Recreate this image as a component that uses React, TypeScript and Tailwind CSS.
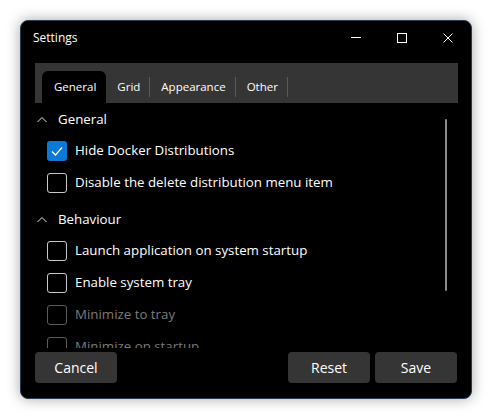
import React from "react";

const font = { fontFamily: '"Open Sans", "Noto Sans", sans-serif' };

const Chevron = () => (
  <svg width="12" height="12" viewBox="0 0 12 12" className="shrink-0">
    <path d="M1.5 8 L6 3.5 L10.5 8" fill="none" stroke="#e6e6e6" strokeWidth="1" />
  </svg>
);

const Header = ({ label, className = "" }: { label: string; className?: string }) => (
  <div className={"flex items-center h-[31px] shrink-0 pl-[15px] gap-[10px] text-[13.3px] text-white " + className}>
    <Chevron />
    <span>{label}</span>
  </div>
);

const Check = ({
  label,
  checked = false,
  disabled = false,
}: {
  label: string;
  checked?: boolean;
  disabled?: boolean;
}) => (
  <div className="flex items-center h-[32px] pl-[26px] gap-[8px] text-[13.3px] shrink-0">
    {checked ? (
      <div className="w-[20px] h-[20px] rounded-[3px] bg-[#0a7ad6] flex items-center justify-center">
        <svg width="14" height="14" viewBox="0 0 14 14">
          <path d="M2 7.5 L5.5 11 L12 3.5" fill="none" stroke="#fff" strokeWidth="1.2" />
        </svg>
      </div>
    ) : (
      <div
        className={
          "w-[20px] h-[20px] rounded-[3px] border " +
          (disabled ? "border-[#5c5c5c]" : "border-[#c9c9c9]")
        }
      />
    )}
    <span className={disabled ? "text-[#7a7a7a]" : "text-white"}>{label}</span>
  </div>
);

const Tab = ({ label, active = false, sep = true }: { label: string; active?: boolean; sep?: boolean }) => (
  <div className="flex items-center h-full">
    <div
      className={
        "h-full flex items-center text-[11.5px] text-white " +
        (active ? "bg-black rounded-t-[6px] pl-[12px] pr-[10px]" : "pl-[11px] pr-[9px]")
      }
    >
      {label}
    </div>
    {sep && <div className="w-px h-[20px] bg-[#5a5a5a]" />}
  </div>
);

export default function App() {
  return (
    <div className="w-[493px] h-[420px] bg-white pt-[20px] pl-[20px]" style={font}>
      <div className="w-[452px] h-[379px] bg-black border border-[#2a3a50] rounded-[8px] shadow-[0_0_14px_rgba(0,0,0,0.35)] flex flex-col overflow-hidden">
        {/* title bar */}
        <div className="flex items-center h-[33px] shrink-0">
          <div className="pl-[12px] text-[12px] text-white flex-1">Settings</div>
          <div className="flex h-full">
            <div className="w-[46px] flex items-center justify-center">
              <div className="w-[10px] h-px bg-white" />
            </div>
            <div className="w-[46px] flex items-center justify-center">
              <div className="w-[10px] h-[10px] border border-white" />
            </div>
            <div className="w-[46px] flex items-center justify-center">
              <svg width="10" height="10" viewBox="0 0 10 10">
                <path d="M0.5 0.5 L9.5 9.5 M9.5 0.5 L0.5 9.5" stroke="#fff" strokeWidth="1" />
              </svg>
            </div>
          </div>
        </div>

        {/* tabs */}
        <div className="mt-[9px] mx-[13px] ml-[14px] h-[40px] bg-[#353535] pl-[7px] pt-[8px] flex shrink-0">
          <Tab label="General" active sep={false} />
          <Tab label="Grid" />
          <Tab label="Appearance" />
          <Tab label="Other" />
        </div>

        {/* content */}
        <div className="flex h-[244px] mt-[1px] shrink-0 overflow-hidden">
          <div className="flex-1 flex flex-col">
            <Header label="General" />
            <Check label="Hide Docker Distributions" checked />
            <Check label="Disable the delete distribution menu item" />
            <Header label="Behaviour" className="mt-[5px]" />
            <Check label="Launch application on system startup" />
            <Check label="Enable system tray" />
            <Check label="Minimize to tray" disabled />
            <Check label="Minimize on startup" disabled />
          </div>
          <div className="w-[2px] h-[172px] mt-[15px] mr-[24px] bg-[#8a8a8a] rounded-full" />
        </div>

        {/* buttons */}
        <div className="flex items-center px-[14px] mt-[4px] gap-[5px]">
          <button className="w-[82px] h-[31px] bg-[#353535] rounded-[4px] text-[14px] text-white">Cancel</button>
          <div className="flex-1" />
          <button className="w-[82px] h-[31px] bg-[#353535] rounded-[4px] text-[14px] text-white">Reset</button>
          <button className="w-[82px] h-[31px] bg-[#353535] rounded-[4px] text-[14px] text-white">Save</button>
        </div>
      </div>
    </div>
  );
}
